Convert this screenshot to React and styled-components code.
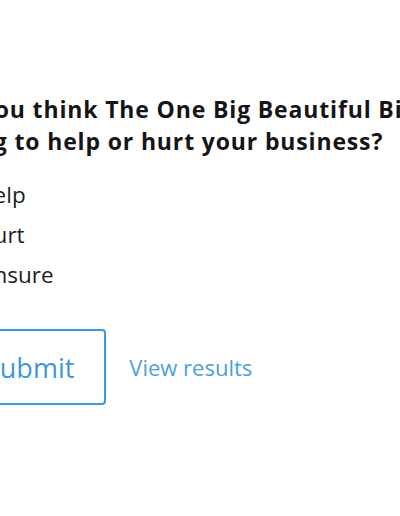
import React from "react";
import styled, { createGlobalStyle } from "styled-components";

const Global = createGlobalStyle`
  html, body {
    margin: 0;
    padding: 0;
    background: #fff;
    overflow: hidden;
  }
  body {
    font-family: "Open Sans", "Noto Sans", sans-serif;
    color: #151515;
  }
`;

const Page = styled.div`
  width: 400px;
  height: 516px;
  overflow: hidden;
`;

// the poll is wider than the view and starts left of it
const Poll = styled.form`
  width: 600px;
  margin-left: -47px;
  padding-top: 93px;
`;

const Question = styled.h2`
  margin: 0 0 18px -12px;
  font-size: 23px;
  font-weight: 700;
  letter-spacing: 0.85px;
  line-height: 32px;
  width: 540px;
`;

const Options = styled.div`
  display: flex;
  flex-direction: column;
`;

const Option = styled.label`
  display: flex;
  align-items: center;
  gap: 9px;
  font-size: 22.5px;
  line-height: 40px;
  color: #1e1e1e;
  cursor: pointer;

  input {
    margin: 0;
    width: 15px;
    height: 15px;
  }
`;

const Actions = styled.div`
  display: flex;
  align-items: center;
  gap: 23px;
  margin-top: 34px;
`;

const SubmitButton = styled.button`
  font-family: inherit;
  font-size: 27px;
  color: #3b98d8;
  background: #fff;
  border: 2px solid #3b98d8;
  border-radius: 4px;
  height: 76px;
  padding: 0 30px 0 30px;
  cursor: pointer;
`;

const ResultsLink = styled.a`
  font-size: 22px;
  color: #4da0d9;
  text-decoration: none;
  cursor: pointer;
`;

const options = ["Help", "Hurt", "Unsure"];

export default function App() {
  return (
    <Page>
      <Global />
      <Poll onSubmit={(e) => e.preventDefault()}>
        <Question>
          Do you think The One Big Beautiful Bill is going to help or hurt your
          business?
        </Question>
        <Options>
          {options.map((o) => (
            <Option key={o}>
              <input type="radio" name="answer" value={o} />
              {o}
            </Option>
          ))}
        </Options>
        <Actions>
          <SubmitButton type="submit">Submit</SubmitButton>
          <ResultsLink href="#">View results</ResultsLink>
        </Actions>
      </Poll>
    </Page>
  );
}
